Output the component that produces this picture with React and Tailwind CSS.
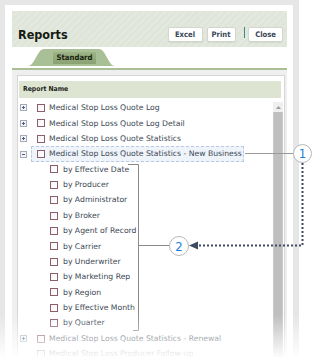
const topRows = [
  { label: 'Medical Stop Loss Quote Log' },
  { label: 'Medical Stop Loss Quote Log Detail' },
  { label: 'Medical Stop Loss Quote Statistics' },
  { label: 'Medical Stop Loss Quote Statistics - New Business', open: true, active: true },
]

const children = [
  'by Effective Date',
  'by Producer',
  'by Administrator',
  'by Broker',
  'by Agent of Record',
  'by Carrier',
  'by Underwriter',
  'by Marketing Rep',
  'by Region',
  'by Effective Month',
  'by Quarter',
]

const bottomRows = [
  { label: 'Medical Stop Loss Quote Statistics - Renewal' },
  { label: 'Medical Stop Loss Producer Follow-up', leaf: true },
]

const Expander = ({ open }) => (
  <svg width="7" height="7" viewBox="0 0 7 7" className="shrink-0">
    <rect x="0.5" y="0.5" width="6" height="6" fill="#f2f4f7" stroke="#a3acb8" />
    <path d="M2 3.5H5" stroke="#4a5f80" />
    {!open && <path d="M3.5 2V5" stroke="#4a5f80" />}
  </svg>
)

const Checkbox = () => (
  <span className="block w-[8px] h-[8px] shrink-0 border border-[#8c5e6c] bg-linear-to-br from-[#f4f4f4] to-white" />
)

const TopRow = ({ label, open, active, leaf }) => (
  <div className="flex items-center h-[15.375px] pl-[1px]">
    {leaf ? <span className="w-[7px] shrink-0" /> : <Expander open={open} />}
    <span
      className={`ml-[4px] flex items-center gap-[4px] h-[16px] pl-[5px] pr-[1px] border border-dashed ${
        active ? 'border-[#b9c9e2] bg-[#eff3fa]' : 'border-transparent'
      }`}
    >
      <Checkbox />
      <span className="whitespace-nowrap">{label}</span>
    </span>
  </div>
)

const ChildRow = ({ label }) => (
  <div className="flex items-center gap-[5px] h-[15.375px] pl-[31px]">
    <Checkbox />
    <span className="whitespace-nowrap">{label}</span>
  </div>
)

const Button = ({ children, w }) => (
  <button
    type="button"
    className={`${w} h-[15px] flex items-center justify-center bg-white border border-[#d2d6cd] rounded-[2px] text-[7.6px] font-bold text-[#3a4656] shadow-[0_1px_1px_rgba(0,0,0,0.06)]`}
  >
    {children}
  </button>
)

export default function App() {
  return (
    <div className="relative w-[312px] h-[357px] overflow-hidden bg-white font-['DejaVu_Sans',sans-serif]">
      <div className="w-[299px] h-[400px] border-l-[5px] border-t-[5px] border-r-[6px] border-[#e6e6e6] bg-white pl-[7px] pt-[6px] pr-[6px]">
        {/* header */}
        <div className="h-[36px] flex items-end justify-between pl-[6px] pr-[4px] pb-[5px] bg-[repeating-linear-gradient(135deg,#dfe6d9_0_3px,#e4e9df_3px_5px)] font-['DejaVu_Sans_Condensed','DejaVu_Sans',sans-serif]">
          <h1 className="text-[12.5px] leading-none font-bold text-[#151a14] mb-[1px]">Reports</h1>
          <div className="flex items-start">
            <Button w="w-[35px]">Excel</Button>
            <span className="ml-[4px]">
              <Button w="w-[29px]">Print</Button>
            </span>
            <span className="ml-[8px] mr-[3px] w-[1.5px] h-[11px] bg-[#3a8a88]" />
            <Button w="w-[35px]">Close</Button>
          </div>
        </div>

        {/* tabs */}
        <div className="h-[21px] border-b-2 border-[#a9bf95]">
          <div className="relative ml-[16px] mt-[2px] w-[87px] h-[17px] pl-[25px] pt-[3px]">
            <svg width="87" height="17" viewBox="0 0 87 17" className="absolute left-0 top-0">
              <path d="M0 17C7 17 9 0 16 0H71C78 0 80 17 87 17Z" fill="#a9bf95" />
            </svg>
            <div className="relative w-[43px] h-[12px] flex items-center justify-center bg-linear-to-b from-[#9db387] to-[#8aa174] text-[7.7px] font-bold text-[#18220f] font-['DejaVu_Sans_Condensed','DejaVu_Sans',sans-serif]">
              Standard
            </div>
          </div>
        </div>

        {/* list panel */}
        <div className="h-[300px] bg-[#efefef] pl-[5px] pr-[2px] pt-[5px]">
          <div className="h-[300px] bg-white border border-[#d6d6d6] pl-[1px] pr-[1px] pt-[5px]">
            <div className="h-[17px] mr-[2px] bg-[#dde5d2] flex items-center pl-[4px] text-[6.8px] font-bold text-[#1e2420] font-['DejaVu_Sans_Condensed','DejaVu_Sans',sans-serif]">
              Report Name
            </div>
            <div className="flex">
              <div className="flex-1 pt-[2.3px] text-[7.7px] text-[#3a4753]">
                {topRows.map((r) => (
                  <TopRow key={r.label} {...r} />
                ))}
                {children.map((c) => (
                  <ChildRow key={c} label={c} />
                ))}
                {bottomRows.map((r) => (
                  <TopRow key={r.label} {...r} />
                ))}
              </div>
              <div className="w-[10px] mt-[4px] h-[280px] flex flex-col bg-[#efefef]">
                <div className="h-[10px] flex items-center justify-center">
                  <svg width="5" height="3" viewBox="0 0 5 3">
                    <path d="M2.5 0L5 3H0Z" fill="#9a9a9a" />
                  </svg>
                </div>
                <div className="flex-1 bg-[#bfbfbf] border-x border-[#c9c9c9]" />
              </div>
            </div>
          </div>
        </div>
      </div>

      {/* callouts */}
      <svg width="312" height="357" className="absolute left-0 top-0 pointer-events-none">
        <path d="M128 164.5H138.5V330.5H133" fill="none" stroke="#8a8a8a" />
        <path d="M138.5 245.5H169" stroke="#8a8a8a" />
        <path d="M245 153.5H293" stroke="#9a9a9a" />
        <path d="M302.5 163V245.5H197" fill="none" stroke="#3e4b60" strokeWidth="2" strokeDasharray="2 2" />
        <path d="M189 245.5L198 241.5V249.5Z" fill="#3e4b60" />
      </svg>
      <div className="absolute left-[293px] top-[144px] w-[19px] h-[19px] rounded-full bg-white border border-[#b8b8b8] flex items-center justify-center text-[13px] leading-none text-[#1a7fdc] font-['DejaVu_Sans_Condensed','DejaVu_Sans',sans-serif]">
        1
      </div>
      <div className="absolute left-[169px] top-[236px] w-[20px] h-[20px] rounded-full bg-white border border-[#b8b8b8] flex items-center justify-center text-[13px] leading-none text-[#1a7fdc] font-['DejaVu_Sans_Condensed','DejaVu_Sans',sans-serif]">
        2
      </div>

      {/* fade */}
      <div className="absolute left-0 right-0 bottom-0 h-[42px] bg-linear-to-b from-white/0 to-white/95 pointer-events-none" />
    </div>
  )
}
